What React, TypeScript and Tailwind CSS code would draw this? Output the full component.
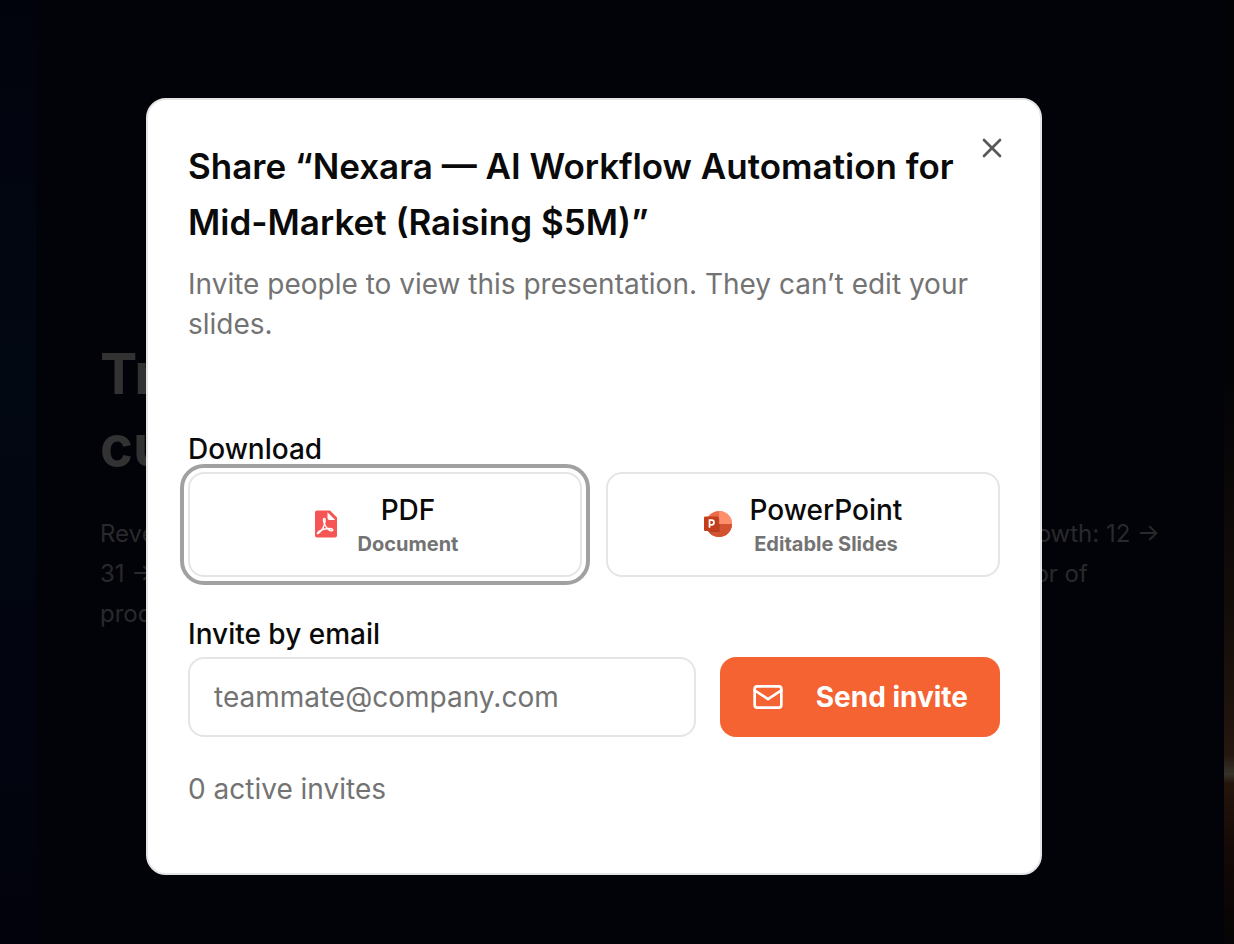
import { X } from "lucide-react";

const formats = [
  { label: "PDF", hint: "Document", icon: PdfIcon, selected: true },
  { label: "PowerPoint", hint: "Editable Slides", icon: PowerPointIcon, selected: false },
];

function PdfIcon() {
  return (
    <svg viewBox="0 0 28 28" className="size-7 shrink-0" aria-hidden="true">
      <path
        d="M5 .5h13L25 7.500v18a2 2 0 0 1-2 2H5a2 2 0 0 1-2-2v-23a2 2 0 0 1 2-2z"
        fill="#f55555"
      />
      <path d="M15.500 2.200V8a2 2 0 0 0 2 2h5.700z" fill="#fff" />
      <path
        d="M12.300 8.500c-1.500 0-.7 3.600.4 6 1.600 3.500 5 6.700 7.200 6.300 1.900-.4.800-2.300-2.600-2.300-3.200 0-6.700.9-9.200 2.100-2.700 1.400-3.300 3.300-2.100 3 2-.5 4.900-5 6.200-8.700.9-2.600 1.600-6.400.1-6.400z"
        fill="none"
        stroke="#fff"
        strokeWidth="1.400"
      />
    </svg>
  );
}

function PowerPointIcon() {
  return (
    <svg viewBox="0 0 28 28" className="size-7 shrink-0" aria-hidden="true">
      <circle cx="15" cy="14" r="13" fill="#ed6c47" />
      <path d="M15 1a13 13 0 0 1 13 13H15z" fill="#ff8f6b" />
      <path d="M2 14h26a13 13 0 0 1-26 0z" fill="#d35230" />
      <path d="M2.500 7.500h11.500a1.500 1.500 0 0 1 1.500 1.500v13H5A13 13 0 0 1 2 14z" fill="#000" opacity=".2" />
      <rect y="6.500" width="14.500" height="14.500" rx="1.300" fill="#c43e1c" />
      <path
        d="M5.500 17.800v-7.600h2.200a2.200 2.200 0 0 1 0 4.600H5.500"
        fill="none"
        stroke="#fff"
        strokeWidth="1.700"
      />
    </svg>
  );
}

function MailIcon() {
  return (
    <svg
      viewBox="0 0 24 24"
      className="size-8"
      fill="none"
      stroke="currentColor"
      strokeWidth="2"
      strokeLinecap="round"
      strokeLinejoin="round"
      aria-hidden="true"
    >
      <rect x="2" y="4" width="20" height="16" rx="2" />
      <path d="m22 7-10 6.600L2 7" />
    </svg>
  );
}

export default function App() {
  return (
    <div className="relative min-h-screen bg-[#020308] font-['Inter',sans-serif]">
      {/* Dimmed slide */}
      <div className="grid min-h-screen grid-cols-[36px_1fr_10px]">
        <div className="bg-linear-to-b from-[#01030c] via-[#020812] via-40% to-[#01020c]" />
        <div className="flex flex-col justify-center px-16 pt-7">
          <h1 className="mb-8 text-[56px] leading-[72px] font-bold text-[#323232]">
            Traction
            <br />
            cut
          </h1>
          <div className="flex justify-between text-2xl leading-10 text-[#29292d]">
            <p>
              Revenue
              <br />
              31 → 48
              <br />
              product
            </p>
            <p>
              &amp; growth: 12 →
              <br />
              factor of
            </p>
          </div>
        </div>
        <div className="bg-[linear-gradient(#030305_40%,#140d09_66%,#24170f_80%,#37332a_82%,#24150c_83%,#140906_90%,#050304)]" />
      </div>

      {/* Share dialog */}
      <div className="absolute inset-0 flex items-center justify-center pt-7 pr-[46px]">
        <div
          role="dialog"
          aria-modal="true"
          aria-labelledby="share-title"
          className="relative w-full max-w-4xl rounded-[20px] border-2 border-[#e5e5e5] bg-white px-10 pt-[38px] pb-10 text-[#0a0a0a]"
        >
          <button type="button" aria-label="Close" className="absolute top-8 right-8 text-[#585858]">
            <X className="size-8" />
          </button>

          <h2 id="share-title" className="text-[35px] leading-14 font-semibold">
            Share “Nexara — AI Workflow Automation for Mid-Market (Raising $5M)”
          </h2>
          <p className="mt-[14px] text-[28px] leading-10 text-[#737373]">
            Invite people to view this presentation. They can’t edit your slides.
          </p>

          <section className="mt-[91px]">
            <h3 className="text-[28px] leading-7 font-medium">Download</h3>
            <div className="mt-[9px] grid grid-cols-2 gap-6">
              {formats.map(({ label, hint, icon: Icon, selected }) => (
                <button
                  key={label}
                  type="button"
                  className={`flex h-[105px] items-center justify-center gap-[18px] rounded-2xl border-2 border-[#e5e5e5] ${
                    selected ? "outline-4 outline-offset-4 outline-[#a1a1a1]" : ""
                  }`}
                >
                  <Icon />
                  <span className="flex flex-col items-center">
                    <span className="text-[28px] leading-10 font-medium">{label}</span>
                    <span className="text-xl leading-7 font-bold text-[#737373]">{hint}</span>
                  </span>
                </button>
              ))}
            </div>
          </section>

          <form className="mt-[43px]">
            <label htmlFor="invite-email" className="block text-[28px] leading-7 font-medium">
              Invite by email
            </label>
            <div className="mt-[9px] flex gap-6">
              <input
                id="invite-email"
                type="email"
                placeholder="teammate@company.com"
                className="h-20 min-w-0 flex-1 rounded-2xl border-2 border-[#e5e5e5] px-6 text-[28px] placeholder:text-[#737373]"
              />
              <button
                type="button"
                className="flex h-20 items-center gap-8 rounded-2xl bg-[#f46331] px-8 text-[28px] font-bold text-white"
              >
                <MailIcon />
                Send invite
              </button>
            </div>
          </form>

          <p className="mt-8 pb-6 text-[28px] leading-10 text-[#737373]">0 active invites</p>
        </div>
      </div>
    </div>
  );
}
